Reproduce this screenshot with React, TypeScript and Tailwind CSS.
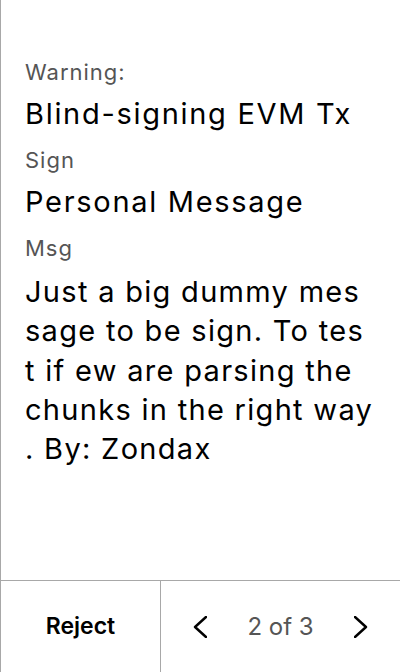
import React from "react";

const font = { fontFamily: "Inter, 'Noto Sans', sans-serif" };

export default function App() {
  const msgLines = [
    "Just a big dummy mes",
    "sage to be sign. To tes",
    "t if ew are parsing the",
    "chunks in the right way",
    ". By: Zondax",
  ];
  return (
    <div
      className="flex h-[672px] w-[400px] flex-col border-l border-[#a8a8a8] bg-white text-black"
      style={font}
    >
      <div className="flex flex-1 flex-col pl-[24px] pt-[52px]">
        <div className="text-[22px] leading-[40px] tracking-[1px] text-[#555555]">Warning:</div>
        <div className="mt-[2px] text-[29px] leading-[40px] tracking-[1.7px] text-black">
          Blind-signing EVM Tx
        </div>
        <div className="mt-[6px] text-[22px] leading-[40px] tracking-[1px] text-[#555555]">Sign</div>
        <div className="mt-[2px] text-[29px] leading-[40px] tracking-[1.7px] text-black">
          Personal Message
        </div>
        <div className="mt-[6px] text-[22px] leading-[40px] tracking-[1px] text-[#555555]">Msg</div>
        <div className="mt-[4px] text-[29px] leading-[39.3px] tracking-[1.3px] text-black">
          {msgLines.map((l, i) => (
            <div key={i} className="whitespace-pre">
              {l}
            </div>
          ))}
        </div>
      </div>
      <div className="flex h-[92px] border-t border-[#a8a8a8]">
        <div className="flex w-[160px] items-center justify-center border-r border-[#a8a8a8] text-[23px] font-semibold">
          Reject
        </div>
        <div className="flex flex-1 items-center justify-between px-[32px]">
          <svg width="14" height="22" viewBox="0 0 14 22" fill="none">
            <polyline
              points="13,1 2,11 13,21"
              stroke="black"
              strokeWidth="2.4"
              strokeLinecap="round"
              strokeLinejoin="round"
            />
          </svg>
          <div className="text-[24px] text-[#555555]">2 of 3</div>
          <svg width="14" height="22" viewBox="0 0 14 22" fill="none">
            <polyline
              points="1,1 12,11 1,21"
              stroke="black"
              strokeWidth="2.4"
              strokeLinecap="round"
              strokeLinejoin="round"
            />
          </svg>
        </div>
      </div>
    </div>
  );
}
